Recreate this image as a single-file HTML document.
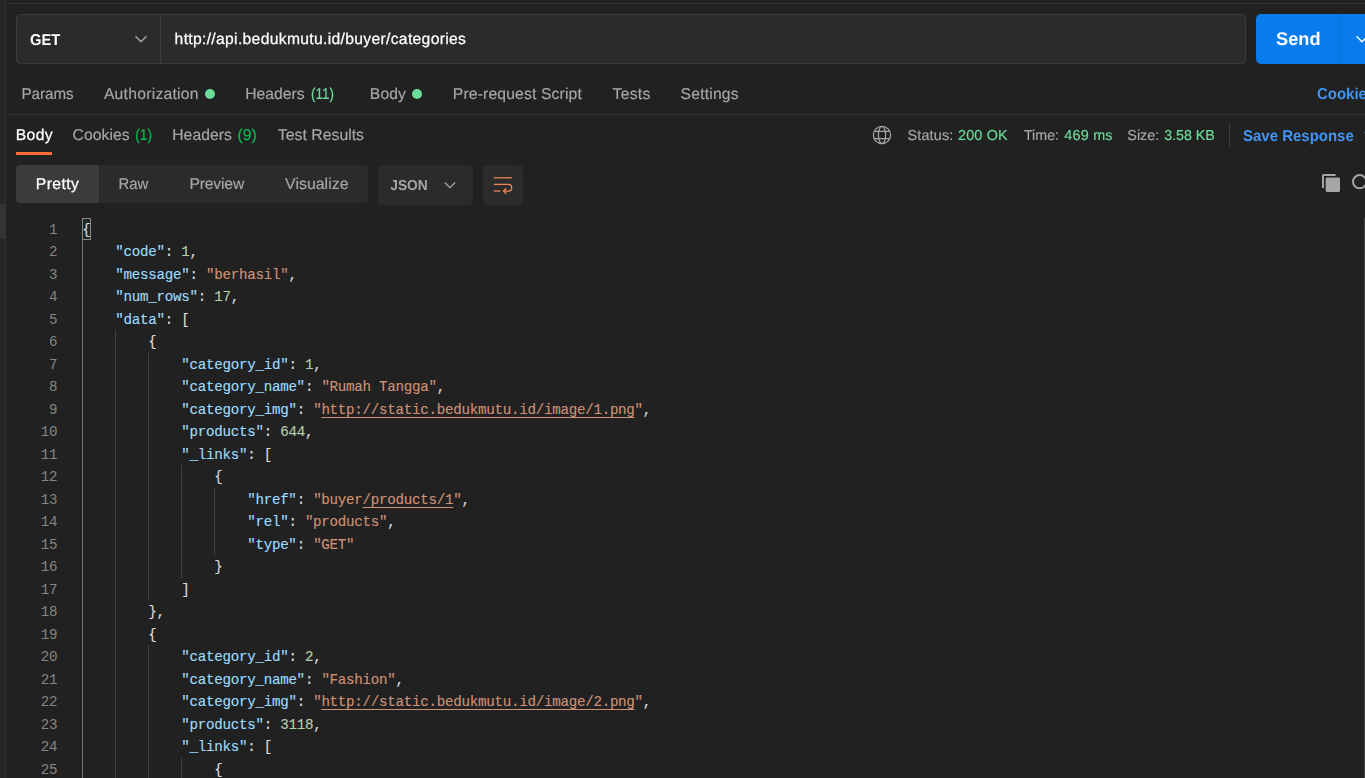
<!DOCTYPE html><html lang="en"><head><meta charset="utf-8"><title>Postman</title><style>
*{box-sizing:border-box;margin:0;padding:0}
html,body{width:1365px;height:778px;overflow:hidden;background:#212121}
body{position:relative;font-family:"Liberation Sans",sans-serif;font-size:15.7px;color:#a6a6a6;-webkit-font-smoothing:antialiased}
.abs{position:absolute}
.t{position:absolute;white-space:nowrap;line-height:20px;height:20px;transform:rotate(0.03deg);-webkit-text-stroke:0.18px}
.b{font-weight:bold}
.w{color:#fff;-webkit-text-stroke:0.25px #fff}
.b{-webkit-text-stroke:0 !important}
.g{color:#6bdd9a}
.g2{color:#0cbb52}
.bl{color:#3f96f5}
#ui{left:0;top:0;width:1365px;height:778px;will-change:transform}
#strip{left:0;top:0;width:6px;height:778px;background:#262626;border-right:1px solid #333}
#stripsel{left:0;top:204px;width:5px;height:35px;background:#333}
#topline{left:6px;top:3px;width:1359px;height:1px;background:#333}
#urlbar{left:16px;top:14px;width:1230px;height:50px;background:#2b2b2b;border:1px solid #3b3b3b;border-radius:4px}
#urldiv{left:160px;top:14px;width:1px;height:50px;background:#3b3b3b}
#send{left:1256px;top:14px;width:130px;height:50px;background:#097bed;border-radius:5px}
#senddiv{left:1340px;top:14px;width:1px;height:50px;background:#0a6dd0}
#reqline{left:6px;top:114px;width:1359px;height:1px;background:#333}
.dot{position:absolute;width:10px;height:10px;border-radius:50%;background:#6bdd9a}
#bodyul{left:16px;top:152.3px;width:36px;height:2.7px;background:#ff6c37}
#vgroup{left:16px;top:164.7px;width:351.8px;height:38px;background:#2b2b2b;border-radius:4px}
#vactive{left:16px;top:164.7px;width:83px;height:38px;background:#3b3b3b;border-radius:4px 0 0 4px}
#jsonbox{left:378px;top:164.7px;width:95px;height:40.2px;background:#2b2b2b;border-radius:4px}
#wrapbox{left:483px;top:164.7px;width:40px;height:40.2px;background:#2b2b2b;border-radius:4px}
#statdiv{left:1229px;top:123px;width:1px;height:24px;background:#3b3b3b}
#code{left:0;top:217.75px;width:1365px;height:600px;font-family:"Liberation Mono",monospace;font-size:14.2px;letter-spacing:-0.271px;color:#dcdcdc}
.ln{position:absolute;left:0;height:22.5px;line-height:22.5px;white-space:pre}
.ln .n{position:absolute;left:20px;top:1px;width:37.3px;text-align:right;color:#858585}
.ln .c{position:absolute;left:82.3px;top:1px;-webkit-text-stroke:0.15px}
.k{color:#9cdcfe}.s{color:#ce9178}.nu{color:#b5cea8}
.u{text-decoration:underline;text-underline-offset:2.5px;text-decoration-thickness:1px}
.ig{position:absolute;width:1px;background:#404040}
#match{left:81.5px;top:218px;width:9.5px;height:22px;border:1px solid #888;background:rgba(0,100,0,.1)}
</style></head><body><div class="abs" id="strip"></div><div class="abs" id="stripsel"></div><div class="abs" id="topline"></div>
<div class="abs" id="urlbar"></div><div class="abs" id="urldiv"></div>
<svg class="abs" style="left:134px;top:33px" width="14" height="12" viewBox="0 0 14 12"><path d="M1.5 3.2 L7 8.7 L12.5 3.2" fill="none" stroke="#a6a6a6" stroke-width="1.4"/></svg>
<div class="abs" id="send"></div><div class="abs" id="senddiv"></div>
<svg class="abs" style="left:1354.7px;top:33px" width="14" height="12" viewBox="0 0 14 12"><path d="M1.5 3.2 L7 8.7 L12.5 3.2" fill="none" stroke="#fff" stroke-width="1.4"/></svg>
<div class="dot" style="left:205px;top:89px"></div>
<div class="dot" style="left:412px;top:89px"></div>
<div class="abs" id="reqline"></div>
<div class="abs" id="bodyul"></div>
<svg class="abs" style="left:872px;top:125px" width="20" height="20" viewBox="0 0 20 20" fill="none" stroke="#a6a6a6" stroke-width="1.25"><circle cx="10" cy="10" r="8.6"/><ellipse cx="10" cy="10" rx="3.6" ry="8.6"/><path d="M2.3 6.3 H17.7 M2.3 13.7 H17.7"/></svg>
<div class="abs" id="statdiv"></div>
<svg class="abs" style="left:1363.6px;top:131.5px" width="8" height="6" viewBox="0 0 8 6"><path d="M0 0 H8 L4 5 Z" fill="#3f96f5"/></svg>
<div class="abs" id="vgroup"></div><div class="abs" id="vactive"></div>
<div class="abs" id="jsonbox"></div>
<svg class="abs" style="left:443px;top:179px" width="14" height="12" viewBox="0 0 14 12"><path d="M1.8 3.5 L7 8.7 L12.2 3.5" fill="none" stroke="#a6a6a6" stroke-width="1.3"/></svg>
<div class="abs" id="wrapbox"></div>
<svg class="abs" style="left:492px;top:175px" width="22" height="21" viewBox="0 0 22 21" fill="none" stroke="#f0875a" stroke-width="1.25"><path d="M1.8 2.8 H19.9"/><path d="M1.8 9.4 H16.4 A3.3 3.3 0 0 1 16.4 16 H11.6"/><path d="M14.2 13.3 L11.5 16 L14.2 18.7"/><path d="M1.8 16 H8.3"/></svg>
<svg class="abs" style="left:1320px;top:172px" width="22" height="22" viewBox="0 0 22 22"><path d="M3 16 V3.8 Q3 2.9 3.9 2.9 H15.6" fill="none" stroke="#a6a6a6" stroke-width="2"/><rect x="5.7" y="5.6" width="14.3" height="14.3" rx="1.3" fill="#a6a6a6"/></svg>
<svg class="abs" style="left:1350px;top:172px" width="22" height="22" viewBox="0 0 22 22"><circle cx="9.7" cy="9.7" r="6.65" fill="none" stroke="#a6a6a6" stroke-width="2"/></svg>
<div class="abs" style="left:1364px;top:217.75px;width:1px;height:561px;background:#464646"></div>
<div class="abs" id="match"></div>
<div class="abs" id="code"><div class="ig" style="left:82px;top:22.5px;height:562.5px;background:#707070;"></div><div class="ig" style="left:115px;top:112.5px;height:472.5px;"></div><div class="ig" style="left:148px;top:135.0px;height:247.5px;"></div><div class="ig" style="left:148px;top:427.5px;height:157.5px;"></div><div class="ig" style="left:181px;top:247.5px;height:112.5px;"></div><div class="ig" style="left:181px;top:540.0px;height:45.0px;"></div><div class="ig" style="left:214px;top:270.0px;height:67.5px;"></div><div class="ln" style="top:0.0px"><span class="n">1</span><span class="c">{</span></div><div class="ln" style="top:22.5px"><span class="n">2</span><span class="c">    <span class="k">"code"</span>: <span class="nu">1</span>,</span></div><div class="ln" style="top:45.0px"><span class="n">3</span><span class="c">    <span class="k">"message"</span>: <span class="s">"berhasil"</span>,</span></div><div class="ln" style="top:67.5px"><span class="n">4</span><span class="c">    <span class="k">"num_rows"</span>: <span class="nu">17</span>,</span></div><div class="ln" style="top:90.0px"><span class="n">5</span><span class="c">    <span class="k">"data"</span>: [</span></div><div class="ln" style="top:112.5px"><span class="n">6</span><span class="c">        {</span></div><div class="ln" style="top:135.0px"><span class="n">7</span><span class="c">            <span class="k">"category_id"</span>: <span class="nu">1</span>,</span></div><div class="ln" style="top:157.5px"><span class="n">8</span><span class="c">            <span class="k">"category_name"</span>: <span class="s">"Rumah Tangga"</span>,</span></div><div class="ln" style="top:180.0px"><span class="n">9</span><span class="c">            <span class="k">"category_img"</span>: <span class="s">"<span class="u">http://static.bedukmutu.id/image/1.png</span>"</span>,</span></div><div class="ln" style="top:202.5px"><span class="n">10</span><span class="c">            <span class="k">"products"</span>: <span class="nu">644</span>,</span></div><div class="ln" style="top:225.0px"><span class="n">11</span><span class="c">            <span class="k">"_links"</span>: [</span></div><div class="ln" style="top:247.5px"><span class="n">12</span><span class="c">                {</span></div><div class="ln" style="top:270.0px"><span class="n">13</span><span class="c">                    <span class="k">"href"</span>: <span class="s">"buyer<span class="u">/products/1</span>"</span>,</span></div><div class="ln" style="top:292.5px"><span class="n">14</span><span class="c">                    <span class="k">"rel"</span>: <span class="s">"products"</span>,</span></div><div class="ln" style="top:315.0px"><span class="n">15</span><span class="c">                    <span class="k">"type"</span>: <span class="s">"GET"</span></span></div><div class="ln" style="top:337.5px"><span class="n">16</span><span class="c">                }</span></div><div class="ln" style="top:360.0px"><span class="n">17</span><span class="c">            ]</span></div><div class="ln" style="top:382.5px"><span class="n">18</span><span class="c">        },</span></div><div class="ln" style="top:405.0px"><span class="n">19</span><span class="c">        {</span></div><div class="ln" style="top:427.5px"><span class="n">20</span><span class="c">            <span class="k">"category_id"</span>: <span class="nu">2</span>,</span></div><div class="ln" style="top:450.0px"><span class="n">21</span><span class="c">            <span class="k">"category_name"</span>: <span class="s">"Fashion"</span>,</span></div><div class="ln" style="top:472.5px"><span class="n">22</span><span class="c">            <span class="k">"category_img"</span>: <span class="s">"<span class="u">http://static.bedukmutu.id/image/2.png</span>"</span>,</span></div><div class="ln" style="top:495.0px"><span class="n">23</span><span class="c">            <span class="k">"products"</span>: <span class="nu">3118</span>,</span></div><div class="ln" style="top:517.5px"><span class="n">24</span><span class="c">            <span class="k">"_links"</span>: [</span></div><div class="ln" style="top:540.0px"><span class="n">25</span><span class="c">                {</span></div></div>
<div class="abs" id="ui"><span class="t b w" id="get" style="left:30px;padding-left:0.1px;top:29.700000000000003px;font-size:15.7px;transform:rotate(0.03deg) scaleX(0.9388);transform-origin:0 50%;">GET</span><span class="t w" id="url" style="left:174px;padding-left:0.6px;top:28.5px;letter-spacing:0.314px;">http://api.bedukmutu.id/buyer/categories</span><span class="t b w" id="sendt" style="left:1276px;padding-left:0.11px;top:28.5px;font-size:18.3px;transform:rotate(0.03deg) scaleX(0.9956);transform-origin:0 50%;">Send</span><span class="t " id="params" style="left:21px;padding-left:0.47px;top:83.5px;transform:rotate(0.03deg) scaleX(0.9651);transform-origin:0 50%;">Params</span><span class="t " id="auth" style="left:103px;padding-left:0.91px;top:83.5px;letter-spacing:0.257px;">Authorization</span><span class="t " id="hdrs" style="left:245px;padding-left:0.24px;top:83.5px;letter-spacing:0.03px;">Headers</span><span class="t g" id="h11" style="left:311px;padding-left:0.01px;top:83.5px;transform:rotate(0.03deg) scaleX(0.8558);transform-origin:0 50%;">(11)</span><span class="t " id="body1" style="left:369px;padding-left:0.88px;top:83.5px;letter-spacing:0.099px;">Body</span><span class="t " id="prs" style="left:452px;padding-left:0.79px;top:83.5px;letter-spacing:0.152px;">Pre-request Script</span><span class="t " id="tests" style="left:612px;padding-left:0.64px;top:83.5px;letter-spacing:0.28px;">Tests</span><span class="t " id="settings" style="left:680px;padding-left:0.58px;top:83.5px;letter-spacing:0.182px;">Settings</span><span class="t bl b" id="cookies1" style="left:1317px;padding-left:0.0px;top:83.7px;font-size:15.7px;transform:rotate(0.03deg) scaleX(0.9547);transform-origin:0 50%;">Cookies</span><span class="t w" id="body2" style="left:15px;padding-left:0.87px;top:124.5px;letter-spacing:0.297px;">Body</span><span class="t " id="cookies2" style="left:72px;padding-left:0.59px;top:124.5px;letter-spacing:0.051px;">Cookies</span><span class="t g2" id="c1" style="left:135px;padding-left:0.31px;top:124.5px;transform:rotate(0.03deg) scaleX(0.8774);transform-origin:0 50%;">(1)</span><span class="t " id="hdrs2" style="left:172px;padding-left:0.22px;top:124.5px;letter-spacing:0.059px;">Headers</span><span class="t g2" id="h9" style="left:237px;padding-left:0.6px;top:124.5px;letter-spacing:0.03px;">(9)</span><span class="t " id="tr" style="left:277px;padding-left:0.82px;top:124.5px;transform:rotate(0.03deg) scaleX(1.0092);transform-origin:0 50%;">Test Results</span><span class="t " id="status" style="left:907px;padding-left:0.54px;top:124.6px;font-size:14.4px;letter-spacing:0.154px;">Status:</span><span class="t g" id="s200" style="left:958px;padding-left:0.03px;top:124.6px;font-size:14.4px;letter-spacing:0.177px;">200 OK</span><span class="t " id="time" style="left:1023px;padding-left:0.93px;top:124.6px;font-size:14.4px;transform:rotate(0.03deg) scaleX(0.9909);transform-origin:0 50%;">Time:</span><span class="t g" id="t469" style="left:1064px;padding-left:0.25px;top:124.6px;font-size:14.4px;letter-spacing:0.225px;">469 ms</span><span class="t " id="size" style="left:1127px;padding-left:0.33px;top:124.6px;font-size:14.4px;letter-spacing:-0.011px;">Size:</span><span class="t g" id="s358" style="left:1164px;padding-left:0.3px;top:124.6px;font-size:14.4px;transform:rotate(0.03deg) scaleX(0.985);transform-origin:0 50%;">3.58 KB</span><span class="t bl b" id="save" style="left:1243px;padding-left:0.06px;top:125.6px;font-size:15.7px;transform:rotate(0.03deg) scaleX(0.9547);transform-origin:0 50%;">Save Response</span><span class="t w" id="pretty" style="left:35px;padding-left:0.82px;top:174px;letter-spacing:0.423px;">Pretty</span><span class="t " id="raw" style="left:118px;padding-left:0.67px;top:174px;transform:rotate(0.03deg) scaleX(0.9465);transform-origin:0 50%;">Raw</span><span class="t " id="preview" style="left:189px;padding-left:0.45px;top:174px;letter-spacing:-0.168px;">Preview</span><span class="t " id="visualize" style="left:285px;padding-left:0.08px;top:174px;transform:rotate(0.03deg) scaleX(1.0149);transform-origin:0 50%;">Visualize</span><span class="t b" id="json" style="left:390px;padding-left:0.3px;top:175px;font-size:14.4px;transform:rotate(0.03deg) scaleX(0.9546);transform-origin:0 50%;">JSON</span></div></body></html>
